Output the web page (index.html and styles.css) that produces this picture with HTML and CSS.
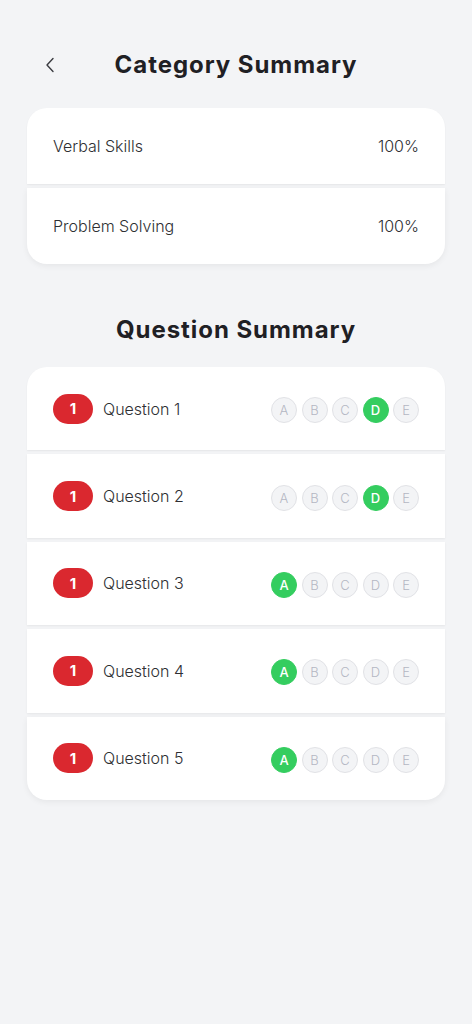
FILE: index.html
```html
<!DOCTYPE html>
<html>
<head>
<meta charset="utf-8">
<link rel="stylesheet" href="styles.css">
</head>
<body>
<div class="page">
  <header class="header">
    <button class="back" aria-label="Back">
      <svg width="10" height="16" viewBox="0 0 10 16"><path d="M8 1.5 L2 8 L8 14.5" fill="none" stroke="#3a3b40" stroke-width="1.4" stroke-linecap="round" stroke-linejoin="round"/></svg>
    </button>
    <h1 class="title">Category Summary</h1>
    <span></span>
  </header>

  <section class="list">
    <div class="row cat-row"><span>Verbal Skills</span><span>100%</span></div>
    <div class="row cat-row"><span>Problem Solving</span><span>100%</span></div>
  </section>

  <h2 class="section-title">Question Summary</h2>

  <section class="list">
    <div class="row q-row">
      <div class="q-left"><span class="badge">1</span><span class="q-name">Question 1</span></div>
      <div class="opts"><span class="opt">A</span><span class="opt">B</span><span class="opt">C</span><span class="opt on">D</span><span class="opt">E</span></div>
    </div>
    <div class="row q-row">
      <div class="q-left"><span class="badge">1</span><span class="q-name">Question 2</span></div>
      <div class="opts"><span class="opt">A</span><span class="opt">B</span><span class="opt">C</span><span class="opt on">D</span><span class="opt">E</span></div>
    </div>
    <div class="row q-row">
      <div class="q-left"><span class="badge">1</span><span class="q-name">Question 3</span></div>
      <div class="opts"><span class="opt on">A</span><span class="opt">B</span><span class="opt">C</span><span class="opt">D</span><span class="opt">E</span></div>
    </div>
    <div class="row q-row">
      <div class="q-left"><span class="badge">1</span><span class="q-name">Question 4</span></div>
      <div class="opts"><span class="opt on">A</span><span class="opt">B</span><span class="opt">C</span><span class="opt">D</span><span class="opt">E</span></div>
    </div>
    <div class="row q-row">
      <div class="q-left"><span class="badge">1</span><span class="q-name">Question 5</span></div>
      <div class="opts"><span class="opt on">A</span><span class="opt">B</span><span class="opt">C</span><span class="opt">D</span><span class="opt">E</span></div>
    </div>
  </section>
</div>
</body>
</html>
```

FILE: styles.css
```css
* { box-sizing: border-box; }
html, body { margin: 0; padding: 0; }
body {
  background: #f3f4f6;
  font-family: "Inter", "Open Sans", sans-serif;
  color: #2b2c31;
  width: 472px;
  height: 1024px;
}
.page {
  padding: 40px 27px 0;
}
.header {
  display: grid;
  grid-template-columns: 1fr auto 1fr;
  align-items: center;
  height: 50px;
  margin-bottom: 18px;
}
.back {
  justify-self: start;
  margin-left: 17px;
  padding: 0;
  border: 0;
  background: none;
  width: 12px;
  height: 18px;
  display: flex;
  align-items: center;
  justify-content: center;
}
.title, .section-title {
  margin: 0;
  font-size: 24px;
  font-weight: 700;
  color: #1f2024;
  letter-spacing: 0.95px;
  line-height: 36px;
  text-align: center;
}
.list {
  display: flex;
  flex-direction: column;
  gap: 4px;
}
.row {
  background: #fff;
  display: flex;
  align-items: center;
  justify-content: space-between;
  padding: 0 26px;
  box-shadow: 0 1px 2px rgba(0,0,0,0.06);
}
.row:first-child { border-radius: 20px 20px 0 0; }
.row:last-child { border-radius: 0 0 20px 20px; box-shadow: 0 2px 6px rgba(0,0,0,0.06); }
.cat-row {
  height: 76px;
  font-size: 16px;
  font-weight: 300;
  color: #2e2f33;
}
.section-title {
  margin-top: 48px;
  margin-bottom: 19px;
}
.q-row {
  height: 83.4px;
}
.q-left {
  display: flex;
  align-items: center;
  gap: 10px;
}
.badge {
  width: 40px;
  height: 30px;
  border-radius: 15px;
  background: #da282f;
  color: #fff;
  font-size: 15px;
  font-weight: 700;
  display: flex;
  align-items: center;
  justify-content: center;
}
.q-name {
  font-size: 16px;
  font-weight: 300;
  color: #2e2f33;
}
.opts {
  display: flex;
  gap: 4.5px;
  margin-top: 3px;
}
.opt {
  width: 26px;
  height: 26px;
  border-radius: 50%;
  background: #f3f4f6;
  border: 1px solid #e1e2e6;
  color: #b4b7c3;
  font-size: 13px;
  font-weight: 300;
  display: flex;
  align-items: center;
  justify-content: center;
}
.opt.on {
  background: #34cd5f;
  border-color: #34cd5f;
  color: #fff;
  font-weight: 500;
}
```
